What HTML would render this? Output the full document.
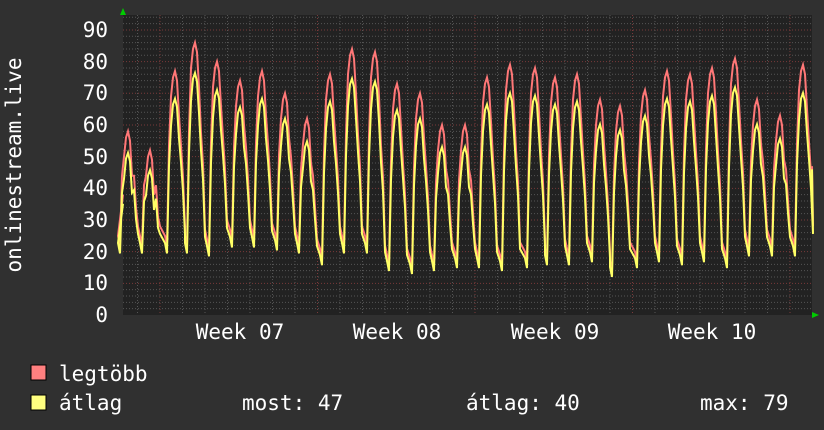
<!DOCTYPE html>
<html><head><meta charset="utf-8"><style>
html,body{margin:0;padding:0;background:#303030;width:824px;height:430px;overflow:hidden}
svg{display:block}
text{font-family:"DejaVu Sans Mono","Liberation Mono",monospace;fill:#fff}
</style></head><body>
<svg id="s" width="824" height="430" xmlns="http://www.w3.org/2000/svg">
<rect x="123" y="15" width="689" height="300" fill="#222"/>
<g id="grid"></g>
<g font-size="21" text-anchor="end">
<text x="108" y="322">0</text><text x="108" y="290">10</text><text x="108" y="259">20</text>
<text x="108" y="227">30</text><text x="108" y="195">40</text><text x="108" y="164">50</text>
<text x="108" y="132">60</text><text x="108" y="100">70</text><text x="108" y="69">80</text>
<text x="108" y="37">90</text>
</g>
<text font-size="21" transform="translate(21,165) rotate(-90)" text-anchor="middle">onlinestream.live</text>
<g font-size="21" text-anchor="middle">
<text x="240" y="339">Week 07</text><text x="397" y="339">Week 08</text>
<text x="555" y="339">Week 09</text><text x="712" y="339">Week 10</text>
</g>
<polyline id="mx" fill="none" stroke="#ff7777" stroke-width="2"/>
<polyline id="av" fill="none" stroke="#ffff66" stroke-width="2"/>
<polygon points="120,15 126,15 123,8" fill="#0c0"/>
<polygon points="812,312 812,318 819,315" fill="#0c0"/>
<rect x="31" y="365" width="15" height="15" fill="#ff8080" stroke="#000"/>
<rect x="31" y="395" width="15" height="15" fill="#ffff80" stroke="#000"/>
<g font-size="21">
<text x="59" y="381">legtöbb</text>
<text x="59" y="410">átlag</text>
<text x="242" y="410">most: 47</text>
<text x="466" y="410">átlag: 40</text>
<text x="700" y="410">max: 79</text>
</g>
</svg>
<script>
var g=document.getElementById('grid'),h='';
function Y(v){return 315-v*3.167;}
for(var v=2;v<=94;v+=2){var y=Y(v);var maj=v%10==0;
h+='<line x1="123" x2="812" y1="'+y+'" y2="'+y+'" stroke="'+(maj?'#7a3a3a':'#555')+'" stroke-width="1" stroke-dasharray="1,2"/>';}
for(var x=160-22.5*1;x<812;x+=22.5){if(x<123)continue;var maj=Math.abs(((x-160)/157.5)-Math.round((x-160)/157.5))<0.01;
h+='<line y1="15" y2="315" x1="'+x+'" x2="'+x+'" stroke="'+(maj?'#7a3a3a':'#555')+'" stroke-width="1" stroke-dasharray="1,2"/>';}
g.innerHTML=h;
var px=[128,150,175,195,217,240,262,285,307,330,352,375,397,420,442,465,487,510,535,555,577,600,620,645,667,690,712,735,757,780,803];
var pk=[58,52,77,86,80,74,77,70,62,76,84,83,73,70,60,60,75,79,78,75,76,68,66,71,77,76,78,81,68,63,79];
var mn=[22,22,22,22,21,24,24,23,22,18,22,22,16,15,16,17,17,16,17,18,18,19,14,17,19,18,19,17,21,21,21,22];
var a=[],b=[];
function pt(x,v,w){a.push(x.toFixed(1)+','+Y(v).toFixed(1));b.push(x.toFixed(1)+','+Y(v*w-1).toFixed(1));}
pt(123,38,0.95);
for(var i=0;i<px.length;i++){var x=px[i],p=pk[i],m=mn[i],m2=mn[i+1];
pt(x-10,m+3,0.95);pt(x-8,m,0.93);pt(x-6,(m+p)/2+4,0.9);pt(x-4,p-8,0.88);pt(x-2,p-2,0.9);pt(x,p,0.9);pt(x+2,p-3,0.9);
pt(x+4,p-14,0.9);pt(x+6,(p+m2)/2+4,0.92);pt(x+8,(p+m2)/2-6,0.92);pt(x+10,m2+6,0.95);}
pt(812,47,1);
document.getElementById('mx').setAttribute('points',a.join(' '));
document.getElementById('av').setAttribute('points',b.join(' '));
</script>
</body></html>
